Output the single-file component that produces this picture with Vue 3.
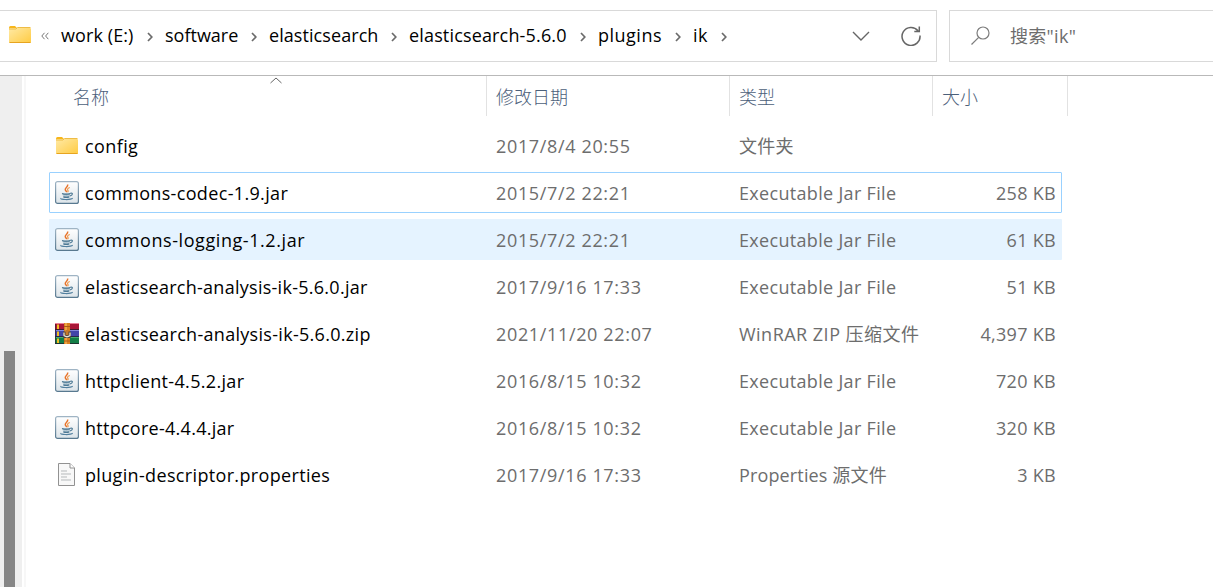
<template>
  <div class="explorer">
    <div class="toolbar">
      <div class="address">
        <svg class="folder" width="22" height="18" viewBox="0 0 22 18">
          <path d="M0 1.5Q0 0 1.5 0H6L8 2V5H0z" fill="#f7b61b" />
          <rect y="2" width="22" height="15" rx="1" fill="url(#folderFill)" />
          <path d="M0 3H7L8.5 1.5H21.5" stroke="#eebc46" fill="none" />
          <path d="M.5 16.5H21.5" stroke="#e7a41f" />
        </svg>
        <svg class="overflow" width="8" height="8" viewBox="0 0 8 8">
          <path d="M3.5 .8L.8 4l2.7 3.2M7.3 .8L4.6 4l2.7 3.2" />
        </svg>
        <div v-for="crumb in crumbs" :key="crumb.name" class="crumb" :style="{ width: crumb.width + 'px' }">
          <span :style="{ letterSpacing: crumb.spacing + 'px' }">{{ crumb.name }}</span>
          <svg width="6" height="10" viewBox="0 0 6 10">
            <path d="M1 1l3.8 4L1 9" />
          </svg>
        </div>
        <svg class="dropdown" width="18" height="10" viewBox="0 0 18 10">
          <path d="M1 1l8 8 8-8" />
        </svg>
        <svg class="refresh" width="20" height="20" viewBox="0 0 20 20">
          <path d="M19 9.500A9 9 0 1 1 17 4.700M18.300 .5V5.500H13.300" />
        </svg>
      </div>
      <div class="search">
        <svg width="19" height="19" viewBox="0 0 19 19">
          <circle cx="12" cy="7" r="6" />
          <path d="M7.700 11.300L.5 18.500" />
        </svg>
        <span>搜索"ik"</span>
      </div>
    </div>

    <div class="body">
      <div class="nav">
        <div class="thumb"></div>
      </div>
      <div class="splitter"></div>
      <div class="files">
        <div class="header">
          <div class="col name">
            名称
            <svg class="sort" width="12" height="7" viewBox="0 0 12 7">
              <path d="M.5 6L6 1l5.500 5" />
            </svg>
          </div>
          <div class="col date">修改日期</div>
          <div class="col type">类型</div>
          <div class="col size">大小</div>
        </div>
        <div
          v-for="file in files"
          :key="file.name"
          class="row"
          :class="{ focused: file.focused, hovered: file.hovered }"
        >
          <div class="icon">
            <svg v-if="file.icon === 'folder'" class="folder" width="22" height="18" viewBox="0 0 22 18">
              <path d="M0 1.5Q0 0 1.5 0H6L8 2V5H0z" fill="#f7b61b" />
              <rect y="2" width="22" height="15" rx="1" fill="url(#folderFill)" />
              <path d="M0 3H7L8.5 1.5H21.5" stroke="#eebc46" fill="none" />
              <path d="M.5 16.5H21.5" stroke="#e7a41f" />
            </svg>
            <svg v-else-if="file.icon === 'jar'" width="24" height="23" viewBox="0 0 24 23">
              <rect x=".6" y=".6" width="22.8" height="21.8" rx="2" fill="url(#jarFill)" stroke="url(#jarEdge)" stroke-width="1.2" />
              <path d="M12.600 3.500c1 2.500-3.600 3.500-2.200 5.700.4.700 1.400 1.200 1.400 2" fill="none" stroke="#e8732a" stroke-width="1.500" />
              <path d="M14.800 6.500c-2.200.9-3 1.900-1.700 3.200.3.500 0 .9-.5 1.500" fill="none" stroke="#f09a4c" stroke-width="1.200" />
              <path d="M7.200 12.200c1.500.8 6 .8 8 0l-.8 3.600c-1.600.8-4.200.8-6 0z" fill="#7f9fb3" />
              <path d="M7 12.400c2 .8 6 .8 8.300 0M8.300 16c1.700.6 4.300.6 6 0M15.300 12.200c3-.7 2.800 2-.4 2.800" fill="none" stroke="#4d7994" stroke-width="1.100" />
              <path d="M8 14.300c2 .6 5 .6 6.600 0" fill="none" stroke="#dfe8ed" stroke-width=".7" />
              <path d="M6 17.200c-1.500 1.600 9.500 1.900 11.700.1" fill="none" stroke="#53809f" stroke-width="1.200" />
            </svg>
            <svg v-else-if="file.icon === 'zip'" width="24" height="21" viewBox="0 0 24 21">
              <rect width="24" height="7" fill="#a91537" />
              <rect y="7" width="24" height="7" fill="#4145a8" />
              <rect y="14" width="24" height="7" fill="#137d46" />
              <path d="M0 .5H24" stroke="#ea7f98" />
              <path d="M1 7.500H24" stroke="#8186d9" />
              <path d="M1 14.500H24" stroke="#43ad70" />
              <path d="M0 6.500H24M0 13.500H24M0 20.500H24" stroke="#201d2b" stroke-opacity=".75" />
              <path d="M.5 1V21" stroke="#34202c" stroke-opacity=".6" />
              <path d="M2 1.500h2v4.500H2zM2 8.500h2v4.500H2zM2 15.500h2v4.500H2z" fill="#f3bd25" />
              <rect x="9" width="6" height="21" fill="#d98020" />
              <path d="M11 0V21" stroke="#f3b052" stroke-width="1.500" />
              <path d="M9 3.500h6M9 18h6" stroke="#a95914" />
              <rect x="8" y="8.500" width="8" height="6.500" rx="1" fill="#4b4038" />
              <path d="M9 9.500v3q3 2.500 6 0v-3" fill="none" stroke="#e8e4d7" stroke-width="1.300" />
              <rect x="10.500" y="7" width="3" height="5" fill="#c5792b" />
            </svg>
            <svg v-else class="text" width="17" height="23" viewBox="0 0 17 23">
              <path d="M.5 .5H12L16.500 5V22.500H.5z" fill="#f8f8f8" stroke="#929292" />
              <path d="M12 .5V5H16.500" fill="#fff" stroke="#929292" />
              <path d="M3 8H9M3 11H13M3 14H9M3 17H13" stroke="#b5b9bb" />
            </svg>
          </div>
          <div class="cell name"><span :style="{ letterSpacing: file.spacing + 'px' }">{{ file.name }}</span></div>
          <div class="cell date">{{ file.date }}</div>
          <div class="cell type"><span :style="{ letterSpacing: file.typeSpacing + 'px' }">{{ file.type }}</span></div>
          <div class="cell size">{{ file.size }}</div>
        </div>
      </div>
    </div>

    <svg class="defs" width="0" height="0">
      <defs>
        <linearGradient id="folderFill" x1="0" y1="0" x2="1" y2="1">
          <stop offset="0" stop-color="#ffe9a4" />
          <stop offset="1" stop-color="#ffcb42" />
        </linearGradient>
        <linearGradient id="jarFill" x1="0" y1="0" x2="0" y2="1">
          <stop offset="0" stop-color="#ffffff" />
          <stop offset="1" stop-color="#dce4e9" />
        </linearGradient>
        <linearGradient id="jarEdge" x1="0" y1="0" x2="0" y2="1">
          <stop offset="0" stop-color="#9fb4c4" />
          <stop offset="1" stop-color="#587990" />
        </linearGradient>
      </defs>
    </svg>
  </div>
</template>

<script setup>
import { ref } from 'vue'

const crumbs = ref([
  { name: 'work (E:)', width: 104, spacing: 0.1 },
  { name: 'software', width: 104, spacing: 0 },
  { name: 'elasticsearch', width: 140, spacing: 0.07 },
  { name: 'elasticsearch-5.6.0', width: 189, spacing: 0.16 },
  { name: 'plugins', width: 95, spacing: 0.5 },
  { name: 'ik', width: 46, spacing: 0.5 },
])

const files = ref([
  { name: 'config', date: '2017/8/4 20:55', type: '文件夹', size: '', icon: 'folder', spacing: 0.4, typeSpacing: 0.2 },
  { name: 'commons-codec-1.9.jar', date: '2015/7/2 22:21', type: 'Executable Jar File', size: '258 KB', icon: 'jar', focused: true, spacing: 0.34, typeSpacing: 0.32 },
  { name: 'commons-logging-1.2.jar', date: '2015/7/2 22:21', type: 'Executable Jar File', size: '61 KB', icon: 'jar', hovered: true, spacing: 0.57, typeSpacing: 0.32 },
  { name: 'elasticsearch-analysis-ik-5.6.0.jar', date: '2017/9/16 17:33', type: 'Executable Jar File', size: '51 KB', icon: 'jar', spacing: 0.27, typeSpacing: 0.32 },
  { name: 'elasticsearch-analysis-ik-5.6.0.zip', date: '2021/11/20 22:07', type: 'WinRAR ZIP 压缩文件', size: '4,397 KB', icon: 'zip', spacing: 0.3, typeSpacing: 0.48 },
  { name: 'httpclient-4.5.2.jar', date: '2016/8/15 10:32', type: 'Executable Jar File', size: '720 KB', icon: 'jar', spacing: 0.32, typeSpacing: 0.32 },
  { name: 'httpcore-4.4.4.jar', date: '2016/8/15 10:32', type: 'Executable Jar File', size: '320 KB', icon: 'jar', spacing: 0.27, typeSpacing: 0.32 },
  { name: 'plugin-descriptor.properties', date: '2017/9/16 17:33', type: 'Properties 源文件', size: '3 KB', icon: 'text', spacing: 0.34, typeSpacing: 0.14 },
])
</script>

<style>
body {
  background: #fff;
  overflow: hidden;
}
</style>

<style scoped>
.explorer {
  display: flex;
  flex-direction: column;
  height: 587px;
  overflow: hidden;
  font-family: 'Open Sans', 'Noto Sans CJK SC', sans-serif;
  font-size: 18px;
  color: #000;
  white-space: nowrap;
}
svg {
  flex: none;
  display: block;
}
.toolbar {
  display: flex;
  gap: 12px;
  height: 76px;
  box-sizing: border-box;
  padding-top: 10px;
  border-bottom: 1px solid #b9b9b9;
  flex: none;
}
.address {
  display: flex;
  align-items: center;
  width: 937px;
  height: 52px;
  box-sizing: border-box;
  border: 1px solid #d9d9d9;
  border-left: none;
  padding-left: 9px;
}
.address .folder {
  margin-top: -2px;
}
.overflow {
  margin: 0 12px 0 10px;
  fill: none;
  stroke: #767676;
}
.crumb {
  display: flex;
  align-items: center;
  justify-content: space-between;
  box-sizing: border-box;
  padding-right: 12px;
  line-height: 24px;
}
.crumb span {
  padding-bottom: 2px;
}
.crumb svg {
  margin-top: 1px;
  fill: none;
  stroke: #6b6b6b;
  stroke-width: 1.7;
}
.dropdown {
  margin-left: auto;
  margin-bottom: 1px;
  fill: none;
  stroke: #666;
  stroke-width: 1.4;
}
.refresh {
  margin: 0 15px 1px 31px;
  fill: none;
  stroke: #666;
  stroke-width: 1.5;
}
.search {
  display: flex;
  align-items: center;
  flex: 1;
  height: 52px;
  box-sizing: border-box;
  border: 1px solid #d9d9d9;
  border-right: none;
  padding-left: 21px;
  color: #6d6d6d;
}
.search svg {
  margin-bottom: 1px;
  fill: none;
  stroke: #7c7c7c;
  stroke-width: 1.2;
}
.search span {
  margin-left: 20px;
  padding-bottom: 2px;
  letter-spacing: 0.3px;
}
.body {
  display: flex;
  flex: 1;
}
.nav {
  width: 22px;
  background: #efefef;
}
.thumb {
  width: 11px;
  height: 236px;
  margin: 275px 0 0 4px;
  background: #868686;
}
.splitter {
  width: 2px;
  margin-left: 2px;
  background: #f7f7f7;
}
.files {
  margin-left: 23px;
  width: 1019px;
}
.header {
  display: flex;
  height: 40px;
  margin-bottom: 9px;
  color: #4c607a;
  font-weight: 300;
  line-height: 42px;
}
.col {
  box-sizing: border-box;
  height: 40px;
  border-right: 1px solid #e2e2e2;
  padding-left: 9px;
  position: relative;
}
.col.name {
  width: 438px;
  padding-left: 24px;
}
.col.date {
  width: 243px;
}
.col.type {
  width: 203px;
}
.col.size {
  width: 135px;
}
.sort {
  position: absolute;
  left: 221px;
  top: 1px;
  fill: none;
  stroke: #666;
}
.row {
  display: flex;
  align-items: center;
  width: 1013px;
  height: 41px;
  box-sizing: border-box;
  border: 1px solid transparent;
  border-radius: 1px;
  margin-bottom: 6px;
  color: #6d6d6d;
}
.row.focused {
  border-color: #99d1ff;
}
.row.hovered {
  background: #e5f3ff;
}
.icon {
  display: flex;
  justify-content: center;
  width: 24px;
  margin-left: 5px;
}
.icon .text {
  margin-right: 1px;
}
.cell {
  line-height: 26px;
}
.cell.name {
  width: 411px;
  margin-left: 6px;
  color: #000;
}
.cell.date {
  width: 243px;
  letter-spacing: 0.65px;
}
.cell.type {
  width: 203px;
}
.cell.size {
  width: 114px;
  text-align: right;
  letter-spacing: 0.3px;
}
.defs {
  position: absolute;
}
</style>
